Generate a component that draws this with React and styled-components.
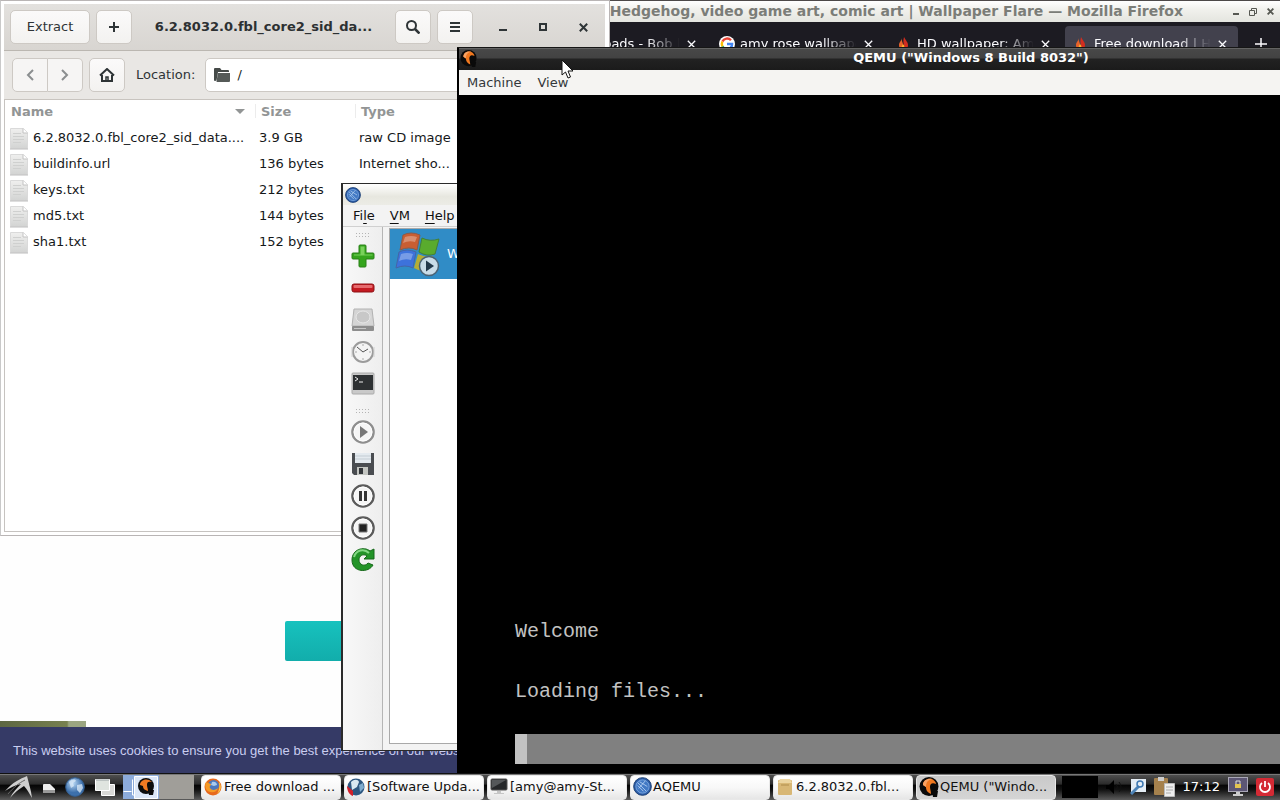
import React from "react";
import styled, { createGlobalStyle, css } from "styled-components";

const GlobalStyle = createGlobalStyle`
  *, *::before, *::after { box-sizing: border-box; }
  html, body { margin: 0; }
  body, button, input { font-family: "DejaVu Sans", sans-serif; font-size: 13px; line-height: 16px; }
  button { border: 0; padding: 0; background: none; color: inherit; }
  svg { display: block; flex: none; }
`;

const Desktop = styled.div`
  display: flex;
  flex-direction: column;
  height: 100vh;
  min-height: 600px;
  overflow: hidden;
  background: #000;
`;

const Workspace = styled.div`
  position: relative;
  flex: 1;
  overflow: hidden;
`;

const Win = styled.section`
  position: absolute;
  display: flex;
  flex-direction: column;
`;

/* ---------- Firefox ---------- */
const FirefoxWindow = styled(Win)`
  inset: 0;
  background: #fefefe;
  border-top: 1px solid #4d4949;
`;

const FirefoxTitle = styled.header`
  display: flex;
  align-items: center;
  justify-content: flex-end;
  gap: 5px;
  height: 21px;
  padding-right: 4px;
  background: linear-gradient(#fff, #f1f1ed 40%, #e4e5df);
  color: #7b7d78;
  font-size: 14px;
  font-weight: bold;
  white-space: nowrap;
`;

const FirefoxName = styled.span`
  margin-right: 42px;
  padding-bottom: 2px;
`;

const TinyButton = styled.button`
  display: grid;
  place-items: center;
  width: 12px;
  height: 12px;
  color: #565852;
`;

const TabStrip = styled.div`
  display: flex;
  justify-content: flex-end;
  align-items: center;
  gap: 4px;
  height: 44px;
  background: #1c1b22;
  color: #fbfbfe;
`;

const Tab = styled.div`
  display: flex;
  align-items: center;
  gap: 5px;
  width: 173px;
  height: 36px;
  padding: 0 11px 0 8px;
  border-radius: 4px;
  background: ${(p) => (p.$active ? "#42414d" : "transparent")};
`;

const TabLabel = styled.span`
  flex: 1;
  overflow: hidden;
  white-space: nowrap;
  mask-image: linear-gradient(90deg, #000 70%, transparent 98%);
`;

const NewTab = styled.button`
  display: grid;
  place-items: center;
  width: 38px;
  height: 36px;
`;

const WebPage = styled.main`
  flex: 1;
  display: flex;
  flex-direction: column;
  justify-content: flex-end;
`;

const TealButton = styled.button`
  width: 240px;
  height: 40px;
  margin: 0 0 60px 285px;
  border-radius: 2px;
  background: linear-gradient(#17c2be, #12adab);
`;

const Thumbnail = styled.div`
  width: 86px;
  height: 6px;
  background: linear-gradient(90deg, #5d6742, #77804f 78%, #9ba581 80%);
`;

const CookieBar = styled.p`
  height: 46px;
  margin: 0;
  padding: 16px 13px;
  background: #353a66;
  color: #c9cdf0;
  font-family: "Liberation Sans", Arial, sans-serif;
`;

/* ---------- Archive manager ---------- */
const ArchiveWindow = styled(Win)`
  left: 0;
  top: 0;
  width: 610px;
  height: 536px;
  padding: 3px 4px 3px 3px;
  border: 1px solid #b9b5b5;
  border-left-color: #c9c9c9;
  background: #fff;
  color: #2e3436;
`;

const ArchiveHeader = styled.header`
  display: flex;
  align-items: center;
  height: 47px;
  padding: 0 2px 0 6px;
  background: linear-gradient(#e3e1de, #d8d5d1);
  border-bottom: 1px solid #bbb7b1;
`;

const GtkButton = styled.button`
  display: grid;
  place-items: center;
  width: ${(p) => p.$width || 36}px;
  height: 34px;
  border: 1px solid #cdc9c4;
  border-radius: 5px;
  background: linear-gradient(#fbfafa, #f3f2f0);
  color: #2e3436;
`;

const ButtonRow = styled.div`
  display: flex;
  gap: 6px;
`;

const ArchiveName = styled.h1`
  flex: 1;
  margin: 0;
  font-size: 13px;
  line-height: 16px;
  text-align: center;
  color: #2c3032;
`;

const Caption = styled.div`
  display: flex;
  padding-left: 10px;
`;

const CaptionButton = styled.button`
  display: grid;
  place-items: center;
  width: 40px;
  height: 34px;
`;

const LocationBar = styled.div`
  display: flex;
  align-items: center;
  gap: 6px;
  height: 49px;
  padding: 0 8px;
  background: #e9e7e4;
  border-bottom: 1px solid #c8c4bf;
`;

const Linked = styled.div`
  display: flex;
  ${GtkButton} { color: #8b8e8f; background: #f6f5f4; }
  ${GtkButton}:first-child { border-radius: 5px 0 0 5px; }
  ${GtkButton}:last-child { border-radius: 0 5px 5px 0; border-left: 0; }
`;

const LocationLabel = styled.label`
  display: flex;
  flex: 1;
  align-items: center;
  gap: 10px;
  padding-left: 5px;
`;

const LocationField = styled.span`
  display: flex;
  flex: 1;
  align-items: center;
  gap: 6px;
  height: 34px;
  padding: 0 8px;
  border: 1px solid #cdc9c4;
  border-radius: 5px;
  background: #fff;
`;

const LocationInput = styled.input`
  flex: 1;
  min-width: 0;
  padding: 0;
  border: 0;
  outline: 0;
  background: none;
  color: #1b1f20;
`;

const FileArea = styled.div`
  flex: 1;
  border: 1px solid #c6c3c0;
  border-top: 0;
`;

const FileTable = styled.table`
  width: 100%;
  border-collapse: collapse;
  table-layout: fixed;
  color: #15181a;
  th {
    height: 25px;
    padding: 0 10px 2px 6px;
    color: #929595;
    text-align: left;
    vertical-align: middle;
  }
  th + th { background: linear-gradient(#ececec, #ececec) no-repeat 0 4px / 1px 14px; }
  td { height: 26px; padding: 0 4px 1px; white-space: nowrap; }
  th:nth-child(1) { width: 250px; }
  th:nth-child(2) { width: 100px; }
`;

const HeadCell = styled.span`
  display: flex;
  align-items: center;
  justify-content: space-between;
`;

const FileName = styled.span`
  display: flex;
  align-items: center;
  gap: 4px;
`;

/* ---------- AQEMU ---------- */
const AqemuWindow = styled(Win)`
  left: 341px;
  top: 183px;
  width: 700px;
  height: 568px;
  border: 1px solid #2b2b2b;
  border-left-width: 2px;
  background: #f3f3f3;
  color: #111;
`;

const AqemuTitle = styled.header`
  display: flex;
  align-items: center;
  height: 21px;
  padding: 0 2px;
  background: linear-gradient(#fff, #e7e7df 60%, #ecece6);
`;

const AqemuMenu = styled.nav`
  display: flex;
  gap: 15px;
  height: 22px;
  padding: 0 10px;
  border-bottom: 1px solid #d0d0d0;
  u { text-underline-offset: 3px; }
`;

const AqemuBody = styled.div`
  display: flex;
  flex: 1;
`;

const ToolColumn = styled.div`
  display: flex;
  flex-direction: column;
  align-items: center;
  width: 40px;
  padding-top: 2px;
  background: linear-gradient(90deg, #f8f8f8, #eeeeee);
  border-right: 1px solid #b5b5b5;
`;

const Handle = styled.div`
  width: 16px;
  height: 5px;
  margin: 3px 0;
  background: radial-gradient(circle, #b4b4b4 32%, transparent 40%) 0 0 / 3px 3px;
`;

const ToolButton = styled.button`
  display: grid;
  place-items: center;
  width: 32px;
  height: 32px;
`;

const ToolGap = styled.div`
  height: 5px;
`;

const VmList = styled.ul`
  flex: 1;
  margin: 1px 6px 6px;
  padding: 0;
  border: 1px solid #a9a9a9;
  background: #fff;
  list-style: none;
`;

const VmItem = styled.li`
  display: flex;
  align-items: center;
  gap: 7px;
  height: 50px;
  padding-left: 2px;
  background: #308cc6;
  color: #fff;
`;

/* ---------- QEMU ---------- */
const QemuWindow = styled(Win)`
  left: 457px;
  right: -205px;
  top: 47px;
  bottom: 0;
  padding-left: 2px;
  background: #000;
  border-top: 1px solid #161616;
`;

const QemuTitle = styled.header`
  display: flex;
  align-items: center;
  height: 22px;
  padding: 0 20px 2px 1px;
  background: linear-gradient(#636363 0 1px, #484848 1px, #424242 10px, #222 11px, #1b1b1b);
  color: #fff;
  font-weight: bold;
`;

const QemuName = styled.span`
  flex: 1;
  text-align: center;
`;

const QemuMenu = styled.nav`
  display: flex;
  gap: 16px;
  height: 25px;
  padding: 0 8px;
  background: #f5f4f2;
  color: #33383a;
`;

const BootScreen = styled.div`
  flex: 1;
  display: flex;
  flex-direction: column;
  justify-content: flex-end;
  padding: 0 56px 9px;
  color: #c2c2c2;
  font-family: "Liberation Mono", monospace;
  font-size: 20px;
  line-height: 30px;
`;

const BootLog = styled.div`
  display: flex;
  flex-direction: column;
  gap: 30px;
  margin-bottom: 27px;
`;

const BootLine = styled.p`
  margin: 0;
`;

const BootProgress = styled.div`
  height: 30px;
  background: #808080;
`;

const BootFill = styled.div`
  width: 12px;
  height: 100%;
  background: #c2c2c2;
`;

const Pointer = styled.svg`
  position: absolute;
  left: 561px;
  top: 59px;
  pointer-events: none;
`;

/* ---------- Panel ---------- */
const Panel = styled.footer`
  display: flex;
  align-items: center;
  height: 27px;
  border-top: 1px solid #111;
  background: linear-gradient(#777 0 1px, #4e4e4e 1px, #2c2c2c 38%, #060606 44%, #111 60%, #5c5c5c);
`;

const Launchers = styled.div`
  display: flex;
  align-items: center;
  gap: 10px;
  padding: 0 8px 0 5px;
`;

const Pager = styled.div`
  display: flex;
  height: 24px;
  width: 71px;
`;

const PagerCell = styled.button`
  flex: 1;
  background: ${(p) => (p.$active ? "#8cabdb" : "#a09e99")};
`;

const TaskList = styled.div`
  display: flex;
  flex: 1;
  gap: 3px;
  padding: 0 2px 0 7px;
`;

const Task = styled.button`
  display: flex;
  align-items: center;
  gap: ${(p) => (p.$tight ? 1 : 2)}px;
  flex: 1 1 0;
  min-width: 0;
  max-width: 140px;
  height: 25px;
  padding: 0 2px 1px;
  border: 1px solid #e8e8e8;
  border-radius: 4px;
  overflow: hidden;
  white-space: nowrap;
  color: #111;
  background: linear-gradient(#fff, #f8f8f8 50%, #e6e6e6);
  ${(p) =>
    p.$active &&
    css`
      background: linear-gradient(#c9c9c9, #d5d5d5);
    `}
`;

const Tray = styled.div`
  display: flex;
  align-items: center;
  gap: 8px;
  padding-right: 6px;
`;

const CpuMonitor = styled.div`
  width: 36px;
  height: 22px;
  background: #000;
`;

const Clock = styled.time`
  color: #fff;
`;

/* ---------- Drawings ---------- */
const Cross = ({ size = 9, weight = 1.3 }) => (
  <svg width={size} height={size} viewBox="0 0 9 9" stroke="currentColor" strokeWidth={weight}>
    <path d="M.8 .8 8.2 8.2M8.2 .8 .8 8.2" />
  </svg>
);

const Flame = () => (
  <svg width="16" height="18" viewBox="0 0 16 18">
    <path d="M5 3c1 3-2 4-2 7 0 4 2 5 5 6-2-3-1-5-1-7z" fill="#e8622a" />
    <path d="M8 2c2 4 4 5 4 8 0 4-2 5-5 6 3-4-1-7 1-14z" fill="#d12d20" />
    <path d="M7 9c2 2 2 4 0 7-2-2-2-4 0-7z" fill="#ffb52e" />
  </svg>
);

const GoogleMark = () => (
  <svg width="16" height="16" viewBox="0 0 16 16">
    <circle cx="8" cy="8" r="8" fill="#fff" />
    <g fill="none" strokeWidth="2.4">
      <path d="M12 4.2A5.2 5.2 0 0 0 3.4 5.6" stroke="#ea4335" />
      <path d="M3.4 5.6a5.2 5.2 0 0 0 0 4.8" stroke="#fbbc05" />
      <path d="M3.4 10.4a5.2 5.2 0 0 0 8 1.6" stroke="#34a853" />
      <path d="M11.4 12A5 5 0 0 0 13.1 8H8" stroke="#4285f4" />
    </g>
  </svg>
);

const FileIcon = () => (
  <svg width="20" height="24" viewBox="0 0 20 24">
    <defs>
      <linearGradient id="sheet" x1="0" y1="0" x2="0" y2="1">
        <stop offset="0" stopColor="#efefee" />
        <stop offset="1" stopColor="#d3d4d3" />
      </linearGradient>
    </defs>
    <path d="M1.500 2.500h13l4 4v16h-17z" fill="url(#sheet)" stroke="#dadada" />
    <path d="M14 2.500V7h4.500" fill="#fff" stroke="#c2c2c2" />
    <path d="M4 7.500h8M4 10.500h11M4 13.500h11M4 16.500h8" stroke="#cfd0cf" />
    <path d="M1 23h18" stroke="#bdbdbd" />
  </svg>
);

const FolderIcon = () => (
  <svg width="17" height="14" viewBox="0 0 17 14">
    <path d="M0 1q0-1 1-1h5l1.500 2H14q1 0 1 1v1H4L2.500 12.500 1 13Q0 13 0 12z" fill="#454a48" />
    <path d="M3.800 5H16v8q0 1-1 1H2.500z" fill="#555a58" />
  </svg>
);

const Feather = ({ size = 16 }) => (
  <svg width={size} height={size} viewBox="0 0 20 20">
    <circle cx="10" cy="9.500" r="9.500" fill="#0a0a0a" />
    <path d="M13 14h6l-1 6h-4z" fill="#0a0a0a" />
    <path d="M4 8C4 3 9 1 13 2c2 1 4 3 4 5-4-2-6 0-6 3 0 2 1 4 1 7-4-2-5-4-5-7z" fill="#f0781f" />
    <path d="M4 8C4 3 9 1 13 2 9 3 7 5 7 10z" fill="#f8a264" />
  </svg>
);

const Globe = ({ size = 16 }) => (
  <svg width={size} height={size} viewBox="0 0 20 20">
    <defs>
      <radialGradient id="sea" cx=".4" cy=".3">
        <stop offset="0" stopColor="#b9d8f5" />
        <stop offset="1" stopColor="#3d70ab" />
      </radialGradient>
    </defs>
    <circle cx="10" cy="10" r="9.300" fill="url(#sea)" stroke="#345f92" />
    <path d="M4 5c3-3 6-3 7-1l-3 2 1 3-3 2zM12 8l5-1 1 4-3 5-3-3z" fill="#dcebf8" opacity=".75" />
  </svg>
);

const AqemuMark = ({ size }) => (
  <svg width={size} height={size} viewBox="0 0 20 20">
    <circle cx="10" cy="10" r="9.300" fill="#2c5da8" stroke="#163a70" />
    <circle cx="10" cy="10" r="7" fill="#4279c4" stroke="#86b0e5" strokeWidth=".8" />
    <path d="M5 6l9 9M6 12l7-8M7 5l8 5M5 9l6 6" stroke="#b7d2f3" strokeWidth=".9" fill="none" />
  </svg>
);

const FirefoxMark = () => (
  <svg width="18" height="18" viewBox="0 0 18 18">
    <circle cx="9" cy="9" r="8.500" fill="#e7691c" />
    <circle cx="9.500" cy="7.500" r="5.500" fill="#4b78bd" />
    <path d="M8 4c3-1 5 1 5 3l-3 1-3-1z" fill="#a9cbee" />
    <path d="M2 4c1 1 3 1 5 2 0 2-2 2-1 4 2 3 6 2 8 0-1 5-9 6-12 1-1-3-1-5 0-7z" fill="#f59a25" />
    <path d="M15 4c3 4 2 9-2 12 2-3 3-7 2-12z" fill="#fcd04b" />
  </svg>
);

const MediaRing = ({ color, children }) => (
  <svg width="24" height="24" viewBox="0 0 24 24">
    <circle cx="12" cy="12" r="10.600" fill="#f5f5f5" stroke={color} strokeWidth="2.400" />
    <circle cx="12" cy="12" r="9" fill="none" stroke="#fff" />
    {children}
  </svg>
);

const AddIcon = () => (
  <svg width="24" height="24" viewBox="0 0 24 24">
    <path d="M8 2q0-1 1-1h5q1 0 1 1v7h7q1 0 1 1v4q0 1-1 1h-7v7q0 1-1 1H9q-1 0-1-1v-7H2q-1 0-1-1v-4q0-1 1-1h6z" fill="#35a51d" stroke="#2a8018" />
    <path d="M9.500 2.500h4v8h8v1H3v-1h6.500z" fill="#8bdc6b" opacity=".8" />
  </svg>
);

const RemoveIcon = () => (
  <svg width="24" height="24" viewBox="0 0 24 24">
    <rect x="1" y="8" width="22" height="8" rx="2" fill="#c41a21" stroke="#8d1015" />
    <rect x="2.500" y="9" width="19" height="3" rx="1" fill="#e66a6d" />
  </svg>
);

const DriveIcon = () => (
  <svg width="24" height="24" viewBox="0 0 24 24">
    <path d="M3 1h18l2 17H1z" fill="#d5d5d5" stroke="#b2b2b2" />
    <ellipse cx="12" cy="9" rx="7" ry="6" fill="#c8c8c8" stroke="#e7e7e7" />
    <rect x="1" y="18" width="22" height="5" rx="1" fill="#8d8d8d" />
    <path d="M3 20.500h12" stroke="#c6c6c6" />
  </svg>
);

const ClockIcon = () => (
  <svg width="24" height="24" viewBox="0 0 24 24">
    <circle cx="12" cy="12" r="10" fill="#f4f4f4" stroke="#9b9b9b" strokeWidth="2" />
    <path d="M6 7l6 5 5-3" fill="none" stroke="#555" />
    <path d="M12 4v2M12 18v2M4 12h2M18 12h2" stroke="#aaa" />
    <path d="M1 7v10M23 7v10" stroke="#d0d0d0" />
  </svg>
);

const TerminalIcon = () => (
  <svg width="24" height="24" viewBox="0 0 24 24">
    <rect x="1" y="1" width="22" height="21" rx="1" fill="#c9c9c9" stroke="#aaa" />
    <rect x="2" y="3" width="20" height="15" fill="#2e3133" />
    <path d="M4 5l3 2-3 2M8 10h4" fill="none" stroke="#eee" />
  </svg>
);

const SaveIcon = () => (
  <svg width="24" height="24" viewBox="0 0 24 24">
    <path d="M1 1h22v22H3l-2-2z" fill="#4a4d51" />
    <rect x="4" y="1" width="16" height="10" fill="#e4eaef" />
    <path d="M4 4h16M4 7h16" stroke="#c3ccd3" />
    <rect x="6" y="15" width="11" height="8" fill="#c4c6c2" />
    <rect x="8" y="16" width="4" height="6" fill="#33363a" />
  </svg>
);

const ReloadIcon = () => (
  <svg width="24" height="24" viewBox="0 0 24 24">
    <path d="M19 3l4-2v10H13l3-3c-4-3-8 0-8 4 0 5 6 7 9 3l5 2C18 25 1 25 1 12 1 1 13-2 19 3z" fill="#239428" stroke="#17691b" />
    <path d="M3 9C5 2 13 0 18 5" fill="none" stroke="#83d783" strokeWidth="2" />
  </svg>
);

const WindowsRunning = () => (
  <svg width="48" height="48" viewBox="0 0 48 48">
    <path d="M11 5q8-4 17 0l-3 15q-8-4-17 0z" fill="#c95e33" stroke="#8c5a4a" />
    <path d="M30 8q8 4 17 1l-4 15q-8 3-16-2z" fill="#59ab2d" stroke="#447f37" />
    <path d="M7 22q8-4 17 0l-3 16q-8-4-17 0z" fill="#3d72dc" stroke="#4565a6" />
    <path d="M26 24q8 4 15 2l-3 14q-8 3-16-2z" fill="#b6ad35" />
    <path d="M13 7q6-2 12 0l-2 5q-6-2-12 1zM9 24q6-2 12 0l-2 6q-6-2-12 1z" fill="#fff" opacity=".3" />
    <circle cx="37" cy="36" r="9.500" fill="#c9dce8" stroke="#4a6274" strokeWidth="1.500" />
    <path d="M34 30.500l8 5.500-8 5.500z" fill="#22384a" />
  </svg>
);

const MonitorIcon = () => (
  <svg width="18" height="18" viewBox="0 0 18 18">
    <rect x="1" y="1" width="16" height="11" rx="1" fill="#26282a" stroke="#555" />
    <path d="M2 2h14L2 10z" fill="#55585a" />
    <path d="M7 13h4v2h3v1H4v-1h3z" fill="#c5c5c5" />
  </svg>
);

const UpdateMark = () => (
  <svg width="18" height="18" viewBox="0 0 18 18">
    <circle cx="9" cy="9" r="8.500" fill="#2d5780" />
    <path d="M4 4c3-3 7-3 8 0l-2 5-5 3z" fill="#d9e8f1" />
    <path d="M12 7l4-2 1 5-4 4z" fill="#7facce" />
    <path d="M0 8l6 5v5C2 17 0 12 0 8z" fill="#d3202a" />
  </svg>
);

const ArchiveIcon = () => (
  <svg width="18" height="18" viewBox="0 0 18 18">
    <rect x="2" y="2" width="14" height="15" rx="1" fill="#d8b775" />
    <path d="M2 5l2-4h10l2 4z" fill="#ecd5a0" />
    <path d="M5 7h8" stroke="#b18e4d" />
  </svg>
);

const tabs = [
  { title: "Downloads - Bob |", icon: <Globe /> },
  { title: "amy rose wallpaper", icon: <GoogleMark /> },
  { title: "HD wallpaper: Amy", icon: <Flame /> },
  { title: "Free download | HD", icon: <Flame />, active: true },
];

const files = [
  ["6.2.8032.0.fbl_core2_sid_data....", "3.9 GB", "raw CD image"],
  ["buildinfo.url", "136 bytes", "Internet sho..."],
  ["keys.txt", "212 bytes", ""],
  ["md5.txt", "144 bytes", ""],
  ["sha1.txt", "152 bytes", ""],
];

const tasks = [
  { title: "Free download ...", icon: <FirefoxMark /> },
  { title: "[Software Upda...", icon: <UpdateMark /> },
  { title: "[amy@amy-St...", icon: <MonitorIcon /> },
  { title: "AQEMU", icon: <AqemuMark size={19} />, tight: true },
  { title: "6.2.8032.0.fbl...", icon: <ArchiveIcon /> },
  { title: "QEMU (\"Windo...", icon: <Feather size={20} />, active: true, tight: true },
];

function Firefox() {
  return (
    <FirefoxWindow>
      <FirefoxTitle>
        <FirefoxName>Hedgehog, video game art, comic art | Wallpaper Flare — Mozilla Firefox</FirefoxName>
        <TinyButton aria-label="Minimize">
          <svg width="8" height="8"><path d="M1 6h6" stroke="currentColor" strokeWidth="2" /></svg>
        </TinyButton>
        <TinyButton aria-label="Restore">
          <svg width="8" height="8" fill="none" stroke="currentColor"><path d="M2.500 2.500v-2h5v5h-2M.5 2.500h5v5h-5z" /></svg>
        </TinyButton>
        <TinyButton aria-label="Close"><Cross size={7} weight={2.4} /></TinyButton>
      </FirefoxTitle>
      <TabStrip>
        {tabs.map((t) => (
          <Tab key={t.title} $active={t.active}>
            {t.icon}
            <TabLabel>{t.title}</TabLabel>
            <button aria-label="Close tab"><Cross /></button>
          </Tab>
        ))}
        <NewTab aria-label="New tab">
          <svg width="12" height="12" stroke="currentColor" strokeWidth="1.500"><path d="M6 0v12M0 6h12" /></svg>
        </NewTab>
      </TabStrip>
      <WebPage>
        <TealButton aria-label="Download" />
        <Thumbnail />
        <CookieBar>This website uses cookies to ensure you get the best experience on our website.</CookieBar>
      </WebPage>
    </FirefoxWindow>
  );
}

function ArchiveManager() {
  return (
    <ArchiveWindow>
      <ArchiveHeader>
        <ButtonRow>
          <GtkButton $width={80}>Extract</GtkButton>
          <GtkButton aria-label="Add files">
            <svg width="10" height="10" stroke="currentColor" strokeWidth="2"><path d="M5 0v10M0 5h10" /></svg>
          </GtkButton>
        </ButtonRow>
        <ArchiveName>6.2.8032.0.fbl_core2_sid_da...</ArchiveName>
        <ButtonRow>
          <GtkButton aria-label="Search">
            <svg width="14" height="14" fill="none" stroke="currentColor" strokeWidth="2"><circle cx="5.500" cy="5.500" r="4.500" /><path d="M9 9l4.500 4.500" strokeWidth="2.600" /></svg>
          </GtkButton>
          <GtkButton aria-label="Menu">
            <svg width="10" height="10" stroke="currentColor" strokeWidth="2"><path d="M0 1h10M0 5h10M0 9h10" /></svg>
          </GtkButton>
        </ButtonRow>
        <Caption>
          <CaptionButton aria-label="Minimize">
            <svg width="8" height="8"><path d="M0 7h8" stroke="currentColor" strokeWidth="2" /></svg>
          </CaptionButton>
          <CaptionButton aria-label="Maximize">
            <svg width="8" height="8"><path d="M1 1h6v6H1z" fill="none" stroke="currentColor" strokeWidth="2" /></svg>
          </CaptionButton>
          <CaptionButton aria-label="Close"><Cross weight={2} /></CaptionButton>
        </Caption>
      </ArchiveHeader>
      <LocationBar>
        <Linked>
          <GtkButton aria-label="Back">
            <svg width="8" height="12" fill="none" stroke="currentColor" strokeWidth="2"><path d="M7 1L2 6l5 5" /></svg>
          </GtkButton>
          <GtkButton $width={35} aria-label="Forward">
            <svg width="8" height="12" fill="none" stroke="currentColor" strokeWidth="2"><path d="M1 1l5 5-5 5" /></svg>
          </GtkButton>
        </Linked>
        <GtkButton aria-label="Home">
          <svg width="16" height="14" viewBox="0 0 16 14" fill="none" stroke="currentColor" strokeWidth="2"><path d="M1 7.500L8 1l7 6.500M3 7v6h10V7" /><path d="M7 13V9h2v4" strokeWidth="1.500" /></svg>
        </GtkButton>
        <LocationLabel>
          Location:
          <LocationField>
            <FolderIcon />
            <LocationInput defaultValue="/" />
          </LocationField>
        </LocationLabel>
      </LocationBar>
      <FileArea>
        <FileTable>
          <thead>
            <tr>
              <th>
                <HeadCell>
                  Name
                  <svg width="10" height="5"><path d="M0 0h10L5 5z" fill="#929595" /></svg>
                </HeadCell>
              </th>
              <th>Size</th>
              <th>Type</th>
            </tr>
          </thead>
          <tbody>
            {files.map(([name, size, type]) => (
              <tr key={name}>
                <td><FileName><FileIcon />{name}</FileName></td>
                <td>{size}</td>
                <td>{type}</td>
              </tr>
            ))}
          </tbody>
        </FileTable>
      </FileArea>
    </ArchiveWindow>
  );
}

function Aqemu() {
  return (
    <AqemuWindow>
      <AqemuTitle><AqemuMark size={16} /></AqemuTitle>
      <AqemuMenu>
        <button>Fi<u>l</u>e</button>
        <button><u>V</u>M</button>
        <button><u>H</u>elp</button>
      </AqemuMenu>
      <AqemuBody>
        <ToolColumn>
          <Handle />
          <ToolButton aria-label="Add VM"><AddIcon /></ToolButton>
          <ToolButton aria-label="Delete VM"><RemoveIcon /></ToolButton>
          <ToolButton aria-label="Drives"><DriveIcon /></ToolButton>
          <ToolButton aria-label="Snapshots"><ClockIcon /></ToolButton>
          <ToolButton aria-label="Monitor"><TerminalIcon /></ToolButton>
          <ToolGap />
          <Handle />
          <ToolButton aria-label="Start">
            <MediaRing color="#8e8e8e"><path d="M9 6l8 6-8 6z" fill="#777" /></MediaRing>
          </ToolButton>
          <ToolButton aria-label="Save"><SaveIcon /></ToolButton>
          <ToolButton aria-label="Pause">
            <MediaRing color="#5b5b5b"><path d="M8 7h3v10H8zM13 7h3v10h-3z" fill="#333" /></MediaRing>
          </ToolButton>
          <ToolButton aria-label="Stop">
            <MediaRing color="#5b5b5b"><path d="M8 8h8v8H8z" fill="#222" stroke="#777" /></MediaRing>
          </ToolButton>
          <ToolButton aria-label="Reset"><ReloadIcon /></ToolButton>
        </ToolColumn>
        <VmList>
          <VmItem><WindowsRunning />Windows 8 Build 8032</VmItem>
        </VmList>
      </AqemuBody>
    </AqemuWindow>
  );
}

function Qemu() {
  return (
    <QemuWindow>
      <QemuTitle>
        <Feather size={17} />
        <QemuName>QEMU ("Windows 8 Build 8032")</QemuName>
      </QemuTitle>
      <QemuMenu>
        <button>Machine</button>
        <button>View</button>
      </QemuMenu>
      <BootScreen>
        <BootLog>
          <BootLine>Welcome</BootLine>
          <BootLine>Loading files...</BootLine>
        </BootLog>
        <BootProgress><BootFill /></BootProgress>
      </BootScreen>
    </QemuWindow>
  );
}

function Taskbar() {
  return (
    <Panel>
      <Launchers>
        <button aria-label="Applications">
          <svg width="28" height="22" viewBox="0 0 28 22">
            <path d="M0 15C8 6 15 3 22 0c2 8 4 14 5 22-3-5-5-9-8-12C14 13 9 17 5 22c3-6 7-10 11-14C10 9 5 12 0 15z" fill="#cfcfcf" />
            <path d="M3 18C9 11 14 7 20 4" stroke="#666" fill="none" />
          </svg>
        </button>
        <button aria-label="Files">
          <svg width="12" height="20" viewBox="0 0 12 20">
            <path d="M0 8q0-1 1-1h6l5 5v4H0z" fill="#ededed" />
            <path d="M0 13h12v3H0z" fill="#999" />
          </svg>
        </button>
        <button aria-label="Web browser"><Globe size={20} /></button>
        <button aria-label="Show desktop">
          <svg width="20" height="18" viewBox="0 0 20 18">
            <path d="M6.500 6.500h13v11h-13z" fill="#d9d9d7" stroke="#fff" />
            <path d="M.5 1.500h14v11H.5z" fill="#dfe4df" stroke="#fff" />
            <path d="M1 2h13" stroke="#9aa2a5" />
          </svg>
        </button>
      </Launchers>
      <Pager>
        <PagerCell $active aria-label="Desktop 1">
          <svg width="35" height="24" viewBox="0 0 35 24">
            <path d="M.5 16.500h8M9.500 4.500V20h4" fill="none" stroke="#fff" />
            <path d="M11.500 1.500h23v22h-23z" fill="#dce7f8" stroke="#fff" />
            <circle cx="23" cy="11" r="8" fill="#0c0c0c" />
            <path d="M25 15h6l-1 5h-4z" fill="#0c0c0c" />
            <path d="M17 10c0-5 7-8 12-3-4-1-5 0-5 3 0 2 1 4 1 6-4-1-5-3-5-5z" fill="#f27a22" />
          </svg>
        </PagerCell>
        <PagerCell aria-label="Desktop 2" />
      </Pager>
      <TaskList>
        {tasks.map((t) => (
          <Task key={t.title} $active={t.active} $tight={t.tight}>
            {t.icon}
            {t.title}
          </Task>
        ))}
      </TaskList>
      <Tray>
        <CpuMonitor />
        <svg width="16" height="16" viewBox="0 0 16 16"><path d="M0 6h3l5-5v14l-5-5H0z" fill="#000" /><path d="M10 5q3 3 0 6M13 3q4 5 0 10" fill="none" stroke="#111" /></svg>
        <svg width="16" height="16" viewBox="0 0 16 16">
          <rect x="1" width="15" height="13" fill="#e4edf5" />
          <path d="M1 15l8-8" stroke="#4d84b8" strokeWidth="3" />
          <circle cx="10" cy="5" r="3" fill="none" stroke="#3d78b2" strokeWidth="1.500" />
        </svg>
        <svg width="21" height="20" viewBox="0 0 21 20">
          <rect y="1" width="14" height="17" rx="1" fill="#a5814d" />
          <rect x="4" width="6" height="4" fill="#ccc" />
          <path d="M10.500 6.500h10v13h-10z" fill="#eee" stroke="#bbb" />
          <path d="M12 10h7M12 13h7M12 16h5" stroke="#aaa" />
        </svg>
        <Clock>17:12</Clock>
        <svg width="20" height="20" viewBox="0 0 20 20">
          <rect x=".5" y=".5" width="19" height="14" fill="#5c5674" stroke="#a9a7b6" />
          <path d="M8 15h4v2h3v2H5v-2h3z" fill="#ccc" />
          <rect x="7" y="7" width="6" height="4" fill="#e3c450" />
          <path d="M8 7V4h4v3" fill="none" stroke="#ddd" />
        </svg>
        <button aria-label="Shut down">
          <svg width="18" height="18" viewBox="0 0 18 18">
            <rect width="18" height="18" rx="2" fill="#d42a34" />
            <path d="M6 5a5 5 0 1 0 6 0M9 3v6" fill="none" stroke="#fff" strokeWidth="1.800" />
          </svg>
        </button>
      </Tray>
    </Panel>
  );
}

export default function App() {
  return (
    <>
      <GlobalStyle />
      <Desktop>
        <Workspace>
          <Firefox />
          <ArchiveManager />
          <Aqemu />
          <Qemu />
          <Pointer width="13" height="21" viewBox="0 0 13 21">
            <path d="M1 1v15l3.500-3 2.500 6 2.500-1-2.500-6h5z" fill="#fff" stroke="#111" />
          </Pointer>
        </Workspace>
        <Taskbar />
      </Desktop>
    </>
  );
}
